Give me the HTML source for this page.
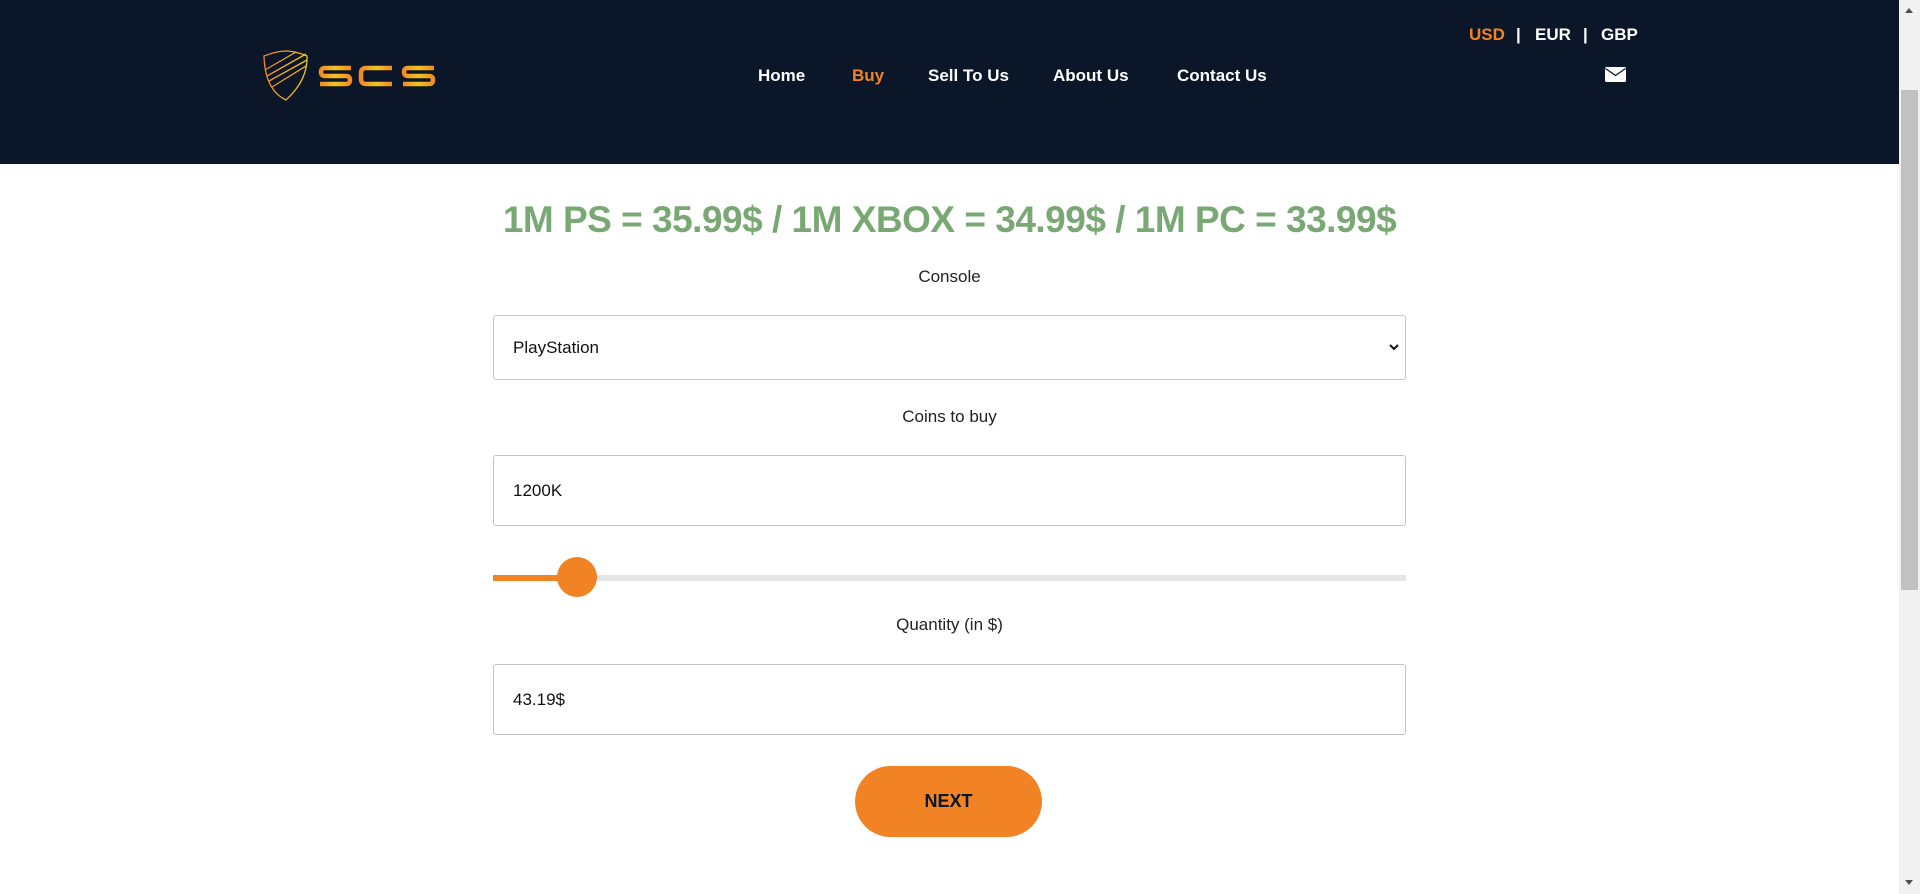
<!DOCTYPE html>
<html><head><style>
*{margin:0;padding:0;box-sizing:border-box}
body{width:1920px;height:894px;overflow:hidden;background:#fff;font-family:"Liberation Sans",sans-serif;position:relative}
.hdr{position:absolute;left:0;top:0;width:1899px;height:164px;background:#0b1728}
.nav a{position:absolute;top:66px;color:#fff;font-weight:bold;font-size:17px;text-decoration:none}
.cur{position:absolute;top:25px;font-weight:bold;font-size:17px;color:#fff}
.lbl{position:absolute;left:0;width:1899px;text-align:center;font-size:17px;color:#222}
.box{position:absolute;left:493px;width:913px;border:1px solid #c4c4c4;border-radius:3px;font-size:17px;color:#111;padding-left:19px;display:flex;align-items:center}
.sb{position:absolute;left:1899px;top:0;width:21px;height:894px;background:#f1f1f1}
</style></head><body>
<div class="hdr">
<svg style="position:absolute;left:262px;top:50px" width="50" height="52" viewBox="0 0 50 52">
<defs><linearGradient id="g" x1="0" x2="1"><stop offset="0" stop-color="#f08a24"/><stop offset="1" stop-color="#f3c324"/></linearGradient></defs>
<path d="M2 6 Q15 1 24 1 Q33 1 45 6 Q46 30 24 50 Q3 40 2 6Z" fill="none" stroke="url(#g)" stroke-width="1.3"/>
<path d="M3 20 L34 2 M5 26 L44 4 M7 31 L45 10 M10 37 L44 16" stroke="url(#g)" stroke-width="1.3" fill="none"/>
</svg>
<svg style="position:absolute;left:318px;top:64px" width="120" height="24" viewBox="0 0 120 24">
<defs><linearGradient id="h" x1="0" x2="1"><stop offset="0" stop-color="#f08a24"/><stop offset=".5" stop-color="#f3c324"/><stop offset="1" stop-color="#f08a24"/></linearGradient></defs>
<g fill="none" stroke="url(#h)" stroke-width="4.5">
<path d="M33 4 H7 Q3 4 3 8 Q3 12 7 12 H28 Q32 12 32 16 Q32 20 28 20 H2"/>
<path d="M74 4 H48 Q43 4 43 9 V15 Q43 20 48 20 H74"/>
<path d="M116 4 H90 Q86 4 86 8 Q86 12 90 12 H111 Q115 12 115 16 Q115 20 111 20 H85"/>
</g></svg>
<div class="nav">
<a style="left:758px">Home</a><a style="left:852px;color:#f18325">Buy</a><a style="left:928px">Sell To Us</a><a style="left:1053px">About Us</a><a style="left:1177px">Contact Us</a>
</div>
<div class="cur" style="left:1469px;color:#f18325">USD</div>
<div class="cur" style="left:1516px">|</div>
<div class="cur" style="left:1535px">EUR</div>
<div class="cur" style="left:1583px">|</div>
<div class="cur" style="left:1601px">GBP</div>
<svg style="position:absolute;left:1605px;top:67px" width="21" height="15" viewBox="0 0 21 15"><rect width="21" height="15" rx="1.5" fill="#fff"/><path d="M0.5 1.5 L10.5 8.5 L20.5 1.5" stroke="#0b1728" stroke-width="1.3" fill="none"/></svg>
</div>
<div style="position:absolute;left:0;width:1899px;top:199px;text-align:center;font-size:37px;font-weight:bold;color:#7aa874;letter-spacing:-0.5px">1M PS = 35.99$ / 1M XBOX = 34.99$ / 1M PC = 33.99$</div>
<div class="lbl" style="top:267px">Console</div>
<div class="box" style="top:315px;height:65px">PlayStation
<svg style="position:absolute;right:6px;top:28px" width="10" height="7" viewBox="0 0 10 7"><path d="M1 1 L5 5 L9 1" stroke="#111" stroke-width="2" fill="none"/></svg></div>
<div class="lbl" style="top:407px">Coins to buy</div>
<div class="box" style="top:455px;height:71px">1200K</div>
<div style="position:absolute;left:493px;top:575px;width:913px;height:6px;background:#e5e5e5"></div>
<div style="position:absolute;left:493px;top:575px;width:84px;height:6px;background:#f18325"></div>
<div style="position:absolute;left:557px;top:557px;width:40px;height:40px;border-radius:50%;background:#f18325"></div>
<div class="lbl" style="top:615px">Quantity (in $)</div>
<div class="box" style="top:664px;height:71px">43.19$</div>
<div style="position:absolute;left:855px;top:766px;width:187px;height:71px;border-radius:36px;background:#f18325;color:#0b1728;font-weight:bold;font-size:18px;display:flex;align-items:center;justify-content:center">NEXT</div>
<div class="sb"><div style="position:absolute;left:2px;top:90px;width:17px;height:500px;background:#c1c1c1"></div>
<div style="position:absolute;left:6px;top:8px;border:4px solid transparent;border-bottom:5px solid #505050;border-top:0"></div>
<div style="position:absolute;left:6px;top:880px;border:4px solid transparent;border-top:5px solid #505050;border-bottom:0"></div></div>
</body></html>
